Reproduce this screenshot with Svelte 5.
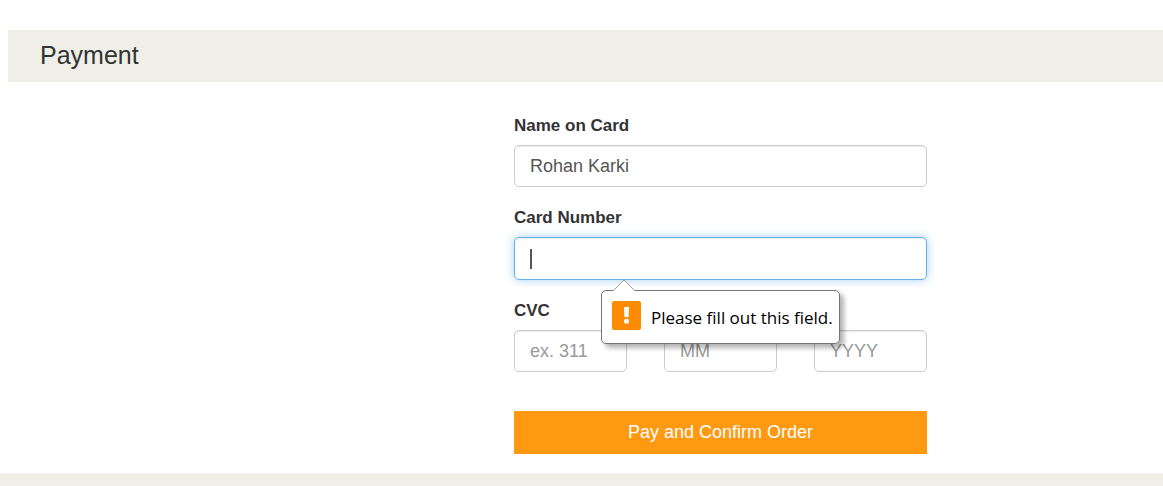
<script>
  let name = $state('Rohan Karki');
  let number = $state('');
  let cvc = $state('');
  let month = $state('');
  let year = $state('');
</script>

<main>
  <h2>Payment</h2>
  <div class="columns">
    <form onsubmit={(e) => e.preventDefault()} novalidate>
      <div class="field">
        <label for="name">Name on Card</label>
        <input id="name" type="text" bind:value={name} />
      </div>

      <div class="field">
        <label for="number">Card Number</label>
        <div class="anchor">
          <input id="number" class="active" type="text" bind:value={number} />
          <span class="caret"></span>
          <div class="tip" role="alert">
            <svg class="arrow" width="22" height="12" viewBox="0 0 22 12" aria-hidden="true">
              <path d="M0 12 L1 11 L11 1 L21 11 L22 12 Z" fill="#fff" />
              <path d="M1 11 L11 1 L21 11" fill="none" stroke="#999" />
            </svg>
            <svg class="mark" width="29" height="29" viewBox="0 0 29 29" aria-hidden="true">
              <rect width="29" height="29" rx="2" fill="#ff8c00" />
              <path d="M12 6h5l-.4 10h-4.2z" fill="#fff" />
              <circle cx="14.5" cy="20.3" r="2.5" fill="#fff" />
            </svg>
            <span>Please fill out this field.</span>
          </div>
        </div>
      </div>

      <div class="row">
        <div class="field">
          <label for="cvc">CVC</label>
          <input id="cvc" type="text" placeholder="ex. 311" bind:value={cvc} />
        </div>
        <div class="field">
          <input type="text" aria-label="MM" placeholder="MM" bind:value={month} />
        </div>
        <div class="field">
          <input type="text" aria-label="YYYY" placeholder="YYYY" bind:value={year} />
        </div>
      </div>

      <button type="submit">Pay and Confirm Order</button>
    </form>
  </div>
</main>
<footer></footer>

<style>
  :global(body) {
    background: #fff;
    color: #333;
    font-family: "Liberation Sans", Arial, sans-serif;
    font-size: 18px;
  }
  * {
    box-sizing: border-box;
  }
  main {
    padding-top: 30px;
  }
  h2 {
    margin: 0 0 0 8px;
    padding: 10px 32px 12px;
    background: #efefe7;
    font-size: 25px;
    line-height: 30px;
    font-weight: 400;
  }
  .columns {
    display: grid;
    grid-template-columns: 514fr 413fr 236fr;
    padding: 31px 0 19px;
  }
  form {
    grid-column: 2;
    display: flex;
    flex-direction: column;
    gap: 18px;
  }
  .field {
    display: flex;
    flex-direction: column;
    gap: 7px;
    min-width: 0;
  }
  label {
    font-size: 17px;
    line-height: 25px;
    font-weight: 700;
  }
  input {
    display: block;
    width: 100%;
    height: 42px;
    padding: 0 15px;
    border: 1px solid #ccc;
    border-radius: 5px;
    outline: 0;
    background: #fff;
    color: #555;
    font: inherit;
    font-size: 18px;
    box-shadow: inset 0 1px 1px rgba(0, 0, 0, 0.075);
  }
  input::placeholder {
    color: #999;
    opacity: 1;
  }
  input.active {
    height: 43px;
    border-color: #66afe9;
    box-shadow:
      inset 0 1px 1px rgba(0, 0, 0, 0.075),
      0 0 10px rgba(102, 175, 233, 0.6);
  }
  .anchor {
    position: relative;
  }
  .caret {
    position: absolute;
    left: 16px;
    top: 12px;
    width: 2px;
    height: 20px;
    background: #555;
  }
  .tip {
    position: absolute;
    z-index: 1;
    left: 87px;
    top: 53px;
    display: flex;
    align-items: center;
    gap: 10px;
    height: 54px;
    padding: 0 6px 0 10px;
    border: 1px solid #767676;
    border-radius: 5px;
    background: #fff;
    box-shadow: 4px 4px 5px rgba(0, 0, 0, 0.3);
    color: #000;
    font-family: "Open Sans", "Noto Sans", sans-serif;
    font-size: 17px;
    white-space: nowrap;
  }
  .arrow {
    position: absolute;
    left: 11px;
    top: -12px;
  }
  .mark {
    flex: none;
    margin-bottom: 4px;
  }
  .row {
    display: grid;
    grid-template-columns: repeat(3, 1fr);
    gap: 37px;
    align-items: end;
  }
  button {
    height: 43px;
    margin-top: 21px;
    padding: 0 16px;
    border: 0;
    background: #ff9912;
    color: #fff;
    font: inherit;
  }
  footer {
    min-height: 13px;
    background: #efefe7;
  }
</style>
